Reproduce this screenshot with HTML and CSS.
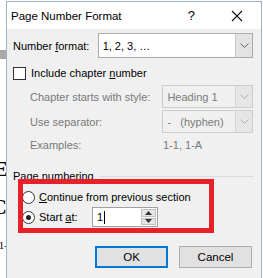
FILE: index.html
```html
<!DOCTYPE html>
<html>
<head>
<meta charset="utf-8">
<link rel="stylesheet" href="styles.css">
</head>
<body>
<div class="doc">
  <div class="doc-band"></div>
  <div class="doc-line doc-e"><span>E</span></div>
  <div class="doc-line doc-c"><span>C</span></div>
  <div class="doc-line doc-1"><span>1-</span></div>
</div>

<div class="dialog">
  <div class="titlebar">
    <span class="title">Page Number Format</span>
    <span class="help">?</span>
    <svg class="close" width="12" height="12" viewBox="0 0 12 12"><path d="M1 1L11 11M11 1L1 11" stroke="#111" stroke-width="1.1"/></svg>
  </div>
  <div class="body">
    <div class="row row-format">
      <span class="label">Number <u>f</u>ormat:</span>
      <div class="combo combo-wide">
        <span class="combo-text">1, 2, 3, …</span>
        <span class="combo-btn"><svg width="9" height="5" viewBox="0 0 9 5"><path d="M0.5 0.5L4.5 4.5L8.5 0.5" fill="none" stroke="#606060" stroke-width="1"/></svg></span>
      </div>
    </div>
    <div class="row row-check">
      <span class="checkbox"></span>
      <span>Include chapter <u>n</u>umber</span>
    </div>
    <div class="row row-sub">
      <span class="sublabel">Chapter starts with style:</span>
      <div class="combo combo-dis">
        <span class="combo-text">Heading 1</span>
        <span class="combo-btn"><svg width="9" height="5" viewBox="0 0 9 5"><path d="M0.5 0.5L4.5 4.5L8.5 0.5" fill="none" stroke="#b0b0b0" stroke-width="1"/></svg></span>
      </div>
    </div>
    <div class="row row-sub">
      <span class="sublabel">Use separator:</span>
      <div class="combo combo-dis">
        <span class="combo-text">-&nbsp;&nbsp;&nbsp;(hyphen)</span>
        <span class="combo-btn"><svg width="9" height="5" viewBox="0 0 9 5"><path d="M0.5 0.5L4.5 4.5L8.5 0.5" fill="none" stroke="#b0b0b0" stroke-width="1"/></svg></span>
      </div>
    </div>
    <div class="row row-sub row-ex">
      <span class="sublabel">Examples:</span>
      <span class="ex-val">1-1, 1-A</span>
    </div>
    <div class="group-head">
      <span>Page numbering</span>
      <span class="group-line"></span>
    </div>
    <div class="row row-radio">
      <span class="radio"></span>
      <span><u>C</u>ontinue from previous section</span>
    </div>
    <div class="row row-radio row-start">
      <span class="radio radio-on"></span>
      <span class="start-label">Start <u>a</u>t:</span>
      <div class="spin">
        <span class="spin-text">1<span class="caret"></span></span>
        <span class="spin-btns">
          <span class="spin-btn"><svg width="7" height="4" viewBox="0 0 7 4"><path d="M0 4L3.5 0L7 4Z" fill="#333"/></svg></span>
          <span class="spin-btn"><svg width="7" height="4" viewBox="0 0 7 4"><path d="M0 0L3.5 4L7 0Z" fill="#333"/></svg></span>
        </span>
      </div>
    </div>
    <div class="buttons">
      <button class="btn btn-ok">OK</button>
      <button class="btn">Cancel</button>
    </div>
  </div>
  <div class="highlight"></div>
</div>
</body>
</html>
```

FILE: styles.css
```css
html, body {
  margin: 0;
  padding: 0;
}
body {
  width: 263px;
  height: 278px;
  overflow: hidden;
  position: relative;
  background: #ffffff;
  font-family: "Liberation Sans", Arial, sans-serif;
  font-size: 11px;
  color: #000;
}

.doc {
  width: 8px;
  height: 278px;
  overflow: hidden;
  background: #fff;
  display: flex;
  flex-direction: column;
}
.doc-band {
  height: 9px;
  margin-top: 50px;
  background: #a9a9a9;
  flex: none;
}
.doc-line {
  display: flex;
  justify-content: flex-end;
  white-space: nowrap;
  font-family: "Liberation Serif", serif;
  flex: none;
}
.doc-e {
  margin-top: 98px;
  font-size: 22px;
  font-weight: bold;
  line-height: 24px;
  margin-right: 0;
}
.doc-c {
  margin-top: 14px;
  font-size: 22px;
  font-weight: bold;
  line-height: 24px;
  margin-right: 1px;
}
.doc-1 {
  margin-top: 20px;
  font-size: 11px;
  line-height: 12px;
  margin-right: 0;
}

.dialog {
  position: absolute;
  left: 6px;
  top: 1px;
  width: 254px;
  height: 300px;
  border: 1px solid #9bb3cf;
  background: #f0f0f0;
  box-sizing: content-box;
}

.titlebar {
  height: 27px;
  background: #ffffff;
  display: flex;
  align-items: center;
  padding-left: 4px;
}
.title {
  font-size: 11.5px;
  flex: 1;
}
.help {
  font-size: 13px;
  margin-right: 36px;
}
.close {
  margin-right: 18px;
}

.body {
  padding: 4px 8px 0 6px;
}

.row {
  display: flex;
  align-items: center;
}
.row-format {
  height: 25px;
}
.label {
  width: 85px;
}
.combo {
  display: flex;
  align-items: stretch;
  background: #fff;
  border: 1px solid #aaaaaa;
  box-sizing: border-box;
}
.combo-wide {
  width: 156px;
  height: 25px;
}
.combo-text {
  flex: 1;
  display: flex;
  align-items: center;
  padding-left: 4px;
}
.combo-btn {
  width: 16px;
  display: flex;
  align-items: center;
  justify-content: center;
  background: #e3e3e3;
  border-left: 1px solid #c8c8c8;
}

.row-check {
  height: 20px;
  margin-top: 5px;
}
.checkbox {
  width: 11px;
  height: 11px;
  border: 1px solid #333;
  background: #fff;
  margin-right: 5px;
}

.row-sub {
  height: 23px;
  padding-left: 17px;
  color: #787878;
  margin-top: 2px;
}
.sublabel {
  width: 133px;
}
.combo-dis {
  width: 91px;
  height: 23px;
  background: #f0f0f0;
  border-color: #cccccc;
  color: #7a7a7a;
}
.combo-dis .combo-btn {
  background: #e6e6e6;
  border-left: 1px solid #d6d6d6;
}
.row-ex {
  height: 20px;
  margin-top: 2px;
}

.group-head {
  display: flex;
  align-items: center;
  height: 18px;
  margin-top: 12px;
}
.group-line {
  flex: 1;
  height: 1px;
  background: #dcdcdc;
  margin-left: 6px;
  margin-right: -1px;
}

.row-radio {
  padding-left: 9px;
  height: 20px;
}
.group-head + .row-radio {
  margin-top: 2px;
}
.radio {
  width: 11px;
  height: 11px;
  border: 1px solid #333;
  border-radius: 50%;
  background: #fff;
  margin-right: 4px;
  position: relative;
}
.radio-on::after {
  content: "";
  position: absolute;
  left: 3px;
  top: 3px;
  width: 5px;
  height: 5px;
  border-radius: 50%;
  background: #222;
}
.start-label {
  width: 53px;
}
.spin {
  width: 66px;
  height: 20px;
  background: #fff;
  border: 1px solid #a0a0a0;
  box-sizing: border-box;
  display: flex;
}
.spin-text {
  flex: 1;
  display: flex;
  align-items: center;
  padding-left: 4px;
}
.caret {
  display: inline-block;
  width: 1px;
  height: 13px;
  background: #000;
  margin-left: 1px;
}
.spin-btns {
  width: 15px;
  display: flex;
  flex-direction: column;
  padding: 1px;
  gap: 1px;
}
.spin-btn {
  flex: 1;
  background: #e5e5e5;
  border: 1px solid #c0c0c0;
  display: flex;
  align-items: center;
  justify-content: center;
}

.buttons {
  display: flex;
  justify-content: flex-end;
  gap: 11px;
  margin-top: 19px;
  padding-right: 1px;
}
.btn {
  width: 73px;
  height: 22px;
  font-family: inherit;
  font-size: 11.5px;
  background: #e1e1e1;
  border: 1px solid #adadad;
  padding: 0;
  color: #000;
}
.btn-ok {
  border: 2px solid #0078d7;
}

.highlight {
  position: absolute;
  left: 11px;
  top: 177px;
  width: 186px;
  height: 44px;
  border: 5px solid #e8202a;
}
```
